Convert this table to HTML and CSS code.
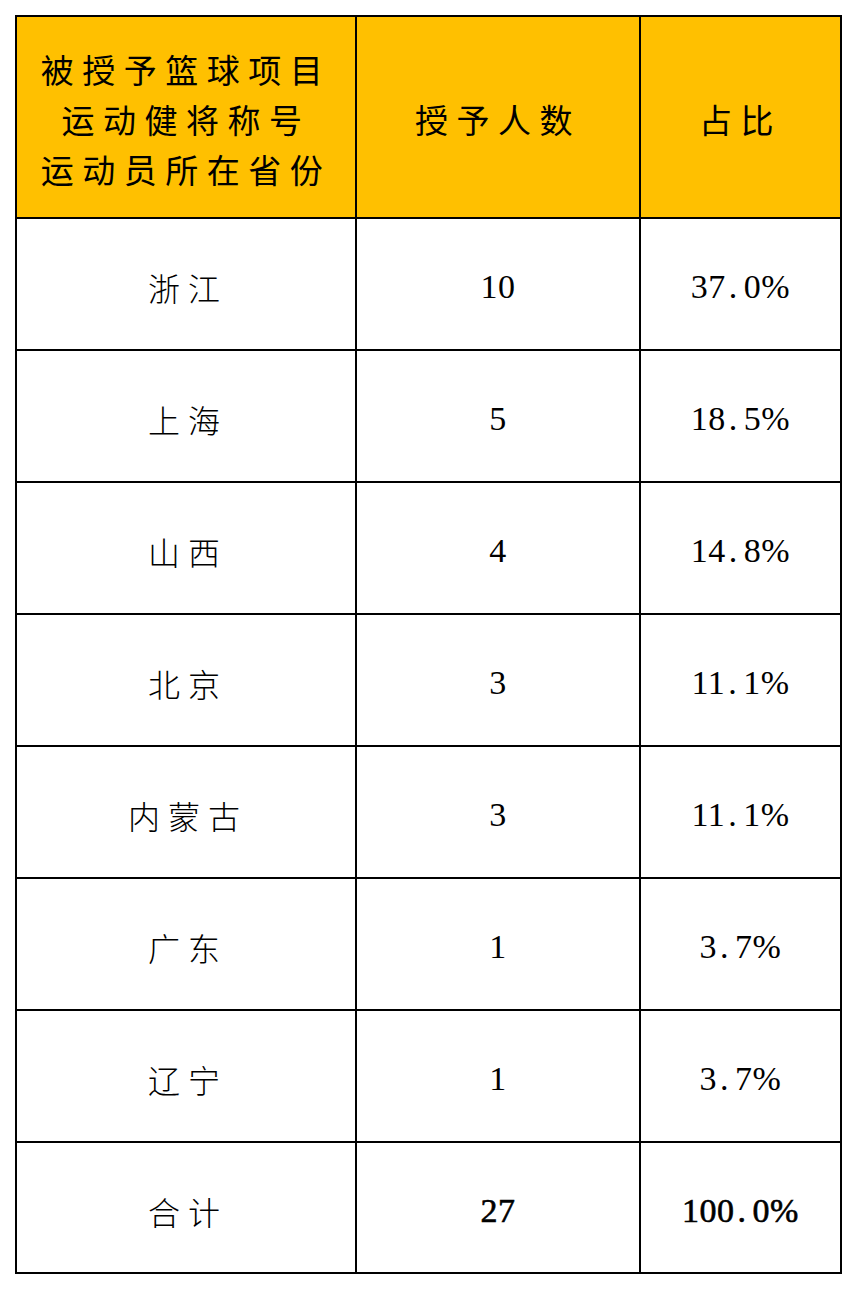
FILE: index.html
```html
<!DOCTYPE html>
<html lang="zh-CN">
<head>
<meta charset="utf-8">
<title>被授予篮球项目运动健将称号运动员所在省份</title>
<link rel="stylesheet" href="styles.css">
</head>
<body>
<div class="sheet">
  <div class="grid">
    <div class="cell head cjk">被授予篮球项目<br>运动健将称号<br>运动员所在省份</div>
    <div class="cell head cjk">授予人数</div>
    <div class="cell head cjk">占比</div>

    <div class="cell cjk">浙江</div>
    <div class="cell num">10</div>
    <div class="cell num">37<span class="dot">.</span>0%</div>

    <div class="cell cjk">上海</div>
    <div class="cell num">5</div>
    <div class="cell num">18<span class="dot">.</span>5%</div>

    <div class="cell cjk">山西</div>
    <div class="cell num">4</div>
    <div class="cell num">14<span class="dot">.</span>8%</div>

    <div class="cell cjk">北京</div>
    <div class="cell num">3</div>
    <div class="cell num">11<span class="dot">.</span>1%</div>

    <div class="cell cjk">内蒙古</div>
    <div class="cell num">3</div>
    <div class="cell num">11<span class="dot">.</span>1%</div>

    <div class="cell cjk">广东</div>
    <div class="cell num">1</div>
    <div class="cell num">3<span class="dot">.</span>7%</div>

    <div class="cell cjk">辽宁</div>
    <div class="cell num">1</div>
    <div class="cell num">3<span class="dot">.</span>7%</div>

    <div class="cell cjk">合计</div>
    <div class="cell num total">27</div>
    <div class="cell num total">100<span class="dot">.</span>0%</div>
  </div>
</div>
</body>
</html>
```

FILE: styles.css
```css
html, body {
  margin: 0;
  padding: 0;
  background: #ffffff;
}

.sheet {
  padding: 15px;
}

.grid {
  display: grid;
  grid-template-columns: 340px 284px 201px;
  grid-template-rows: 202px repeat(7, 132px) 131px;
  width: 825px;
  border-left: 2px solid #000;
  border-top: 2px solid #000;
}

.cell {
  box-sizing: border-box;
  border-right: 2px solid #000;
  border-bottom: 2px solid #000;
  display: flex;
  align-items: center;
  justify-content: center;
  text-align: center;
  color: #000;
  padding-top: 6px;
}

.head {
  background: #ffc000;
  line-height: 50px;
  padding-top: 4px;
}

.cjk {
  font-family: "Noto Sans CJK SC", "Noto Sans CJK JP", sans-serif;
  font-weight: 300;
  font-size: 32px;
  letter-spacing: 8px;
  padding-left: 4px;
}

.head.cjk {
  padding-left: 0;
  font-weight: 400;
  font-size: 33px;
  letter-spacing: 8.5px;
}

.num {
  font-family: "Liberation Serif", "Times New Roman", serif;
  font-size: 34px;
  letter-spacing: 0.5px;
}

.dot {
  margin-left: 3px;
  margin-right: 6px;
}

.total {
  -webkit-text-stroke: 0.6px #000;
}
```
